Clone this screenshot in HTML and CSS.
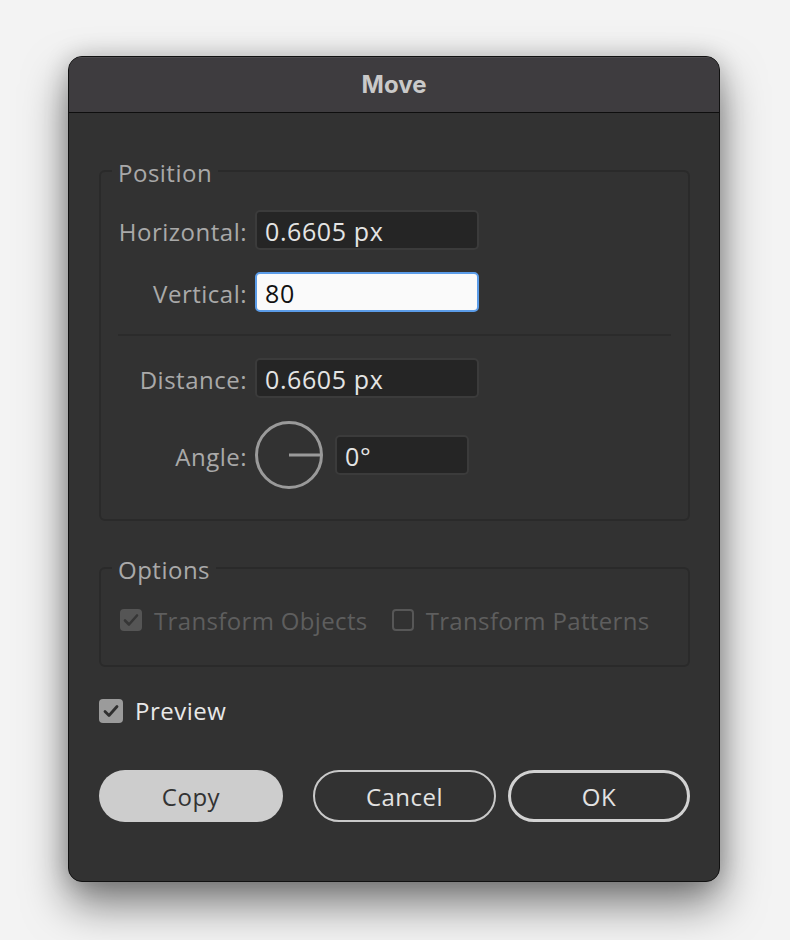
FILE: index.html
```html
<!DOCTYPE html>
<html>
<head>
<meta charset="utf-8">
<title>Move</title>
<link rel="stylesheet" href="styles.css">
</head>
<body>
<div class="window">
  <div class="titlebar">Move</div>
  <div class="content">
    <fieldset class="group position">
      <legend>Position</legend>
      <div class="row">
        <label class="lbl">Horizontal:</label>
        <div class="field">0.6605 px</div>
      </div>
      <div class="row">
        <label class="lbl">Vertical:</label>
        <div class="field focus">80</div>
      </div>
      <div class="sep"></div>
      <div class="row">
        <label class="lbl">Distance:</label>
        <div class="field">0.6605 px</div>
      </div>
      <div class="row">
        <label class="lbl">Angle:</label>
        <div class="angle">
          <svg class="dial" width="70" height="70" viewBox="0 0 70 70">
            <circle cx="35" cy="35" r="32.5" fill="none" stroke="#9a9a9a" stroke-width="3"/>
            <line x1="35" y1="35" x2="67" y2="35" stroke="#9a9a9a" stroke-width="3"/>
          </svg>
          <div class="field small">0°</div>
        </div>
      </div>
    </fieldset>

    <fieldset class="group options">
      <legend>Options</legend>
      <div class="checks">
        <span class="check disabled checked">
          <span class="box"><svg width="22" height="22" viewBox="0 0 22 22"><polyline points="5,11.5 9,15.5 17,6.5" fill="none" stroke="#363636" stroke-width="2.6" stroke-linecap="round" stroke-linejoin="round"/></svg></span>
          <span class="ctext">Transform Objects</span>
        </span>
        <span class="check disabled">
          <span class="box empty"></span>
          <span class="ctext">Transform Patterns</span>
        </span>
      </div>
    </fieldset>

    <div class="preview">
      <span class="pbox"><svg width="24" height="24" viewBox="0 0 24 24"><polyline points="6,12.5 10,16.5 18,7.5" fill="none" stroke="#2f2f2f" stroke-width="2.8" stroke-linecap="round" stroke-linejoin="round"/></svg></span>
      <span class="ptext">Preview</span>
    </div>

    <div class="buttons">
      <button class="btn copy">Copy</button>
      <button class="btn cancel">Cancel</button>
      <button class="btn ok">OK</button>
    </div>
  </div>
</div>
</body>
</html>
```
FILE: styles.css
```css
html, body {
  margin: 0;
  padding: 0;
}
body {
  width: 790px;
  height: 940px;
  background: #f3f3f3;
  font-family: "Open Sans", "Noto Sans", sans-serif;
  padding: 56px 0 0 68px;
  box-sizing: border-box;
  overflow: hidden;
}
.window {
  width: 652px;
  height: 826px;
  box-sizing: border-box;
  border: 1px solid #111;
  border-radius: 14px;
  background: #323232;
  overflow: hidden;
  box-shadow: 0 22px 44px rgba(0,0,0,0.5), 0 0 24px rgba(0,0,0,0.18);
  display: flex;
  flex-direction: column;
}
.titlebar {
  height: 55px;
  flex: none;
  background: #3e3c3f;
  border-bottom: 1px solid #0e0e0e;
  color: #c9c9c9;
  font-family: Inter, Roboto, sans-serif;
  font-weight: 700;
  font-size: 24px;
  line-height: 55px;
  text-align: center;
  box-shadow: inset 0 1px 0 rgba(255,255,255,0.08);
}
.content {
  flex: 1;
  padding: 42px 29px 0 30px;
  display: flex;
  flex-direction: column;
  font-size: 24px;
  letter-spacing: 0.5px;
}
.group {
  margin: 0;
  border: 2px solid #2a2a2a;
  border-radius: 6px;
  min-inline-size: 0;
}
.group legend {
  margin-left: 11px;
  padding: 4px 6px 0 6px;
  color: #a9a9a9;
  font-size: 24px;
  line-height: 28px;
}
.position {
  padding: 23px 0 29px 0;
  display: flex;
  flex-direction: column;
  gap: 22px;
}
.row {
  display: grid;
  grid-template-columns: 146px auto;
  column-gap: 8px;
  align-items: center;
}
.lbl {
  text-align: right;
  color: #a9a9a9;
  font-size: 24px;
  line-height: 28px;
  padding-top: 3px;
}
.field {
  width: 224px;
  height: 40px;
  box-sizing: border-box;
  border: 2px solid #3b3b3b;
  border-radius: 5px;
  background: #252525;
  color: #e4e4e4;
  font-size: 25px;
  letter-spacing: 0.6px;
  line-height: 33px;
  padding: 3px 8px 0 8px;
}
.field.focus {
  background: #fafafa;
  border-color: #5b9ce8;
  color: #111;
}
.field.small {
  width: 134px;
}
.sep {
  height: 2px;
  background: #2b2b2b;
  margin: 0 17px;
}
.angle {
  display: flex;
  align-items: center;
  gap: 11px;
}
.dial {
  display: block;
  margin-left: -1px;
}
.options {
  margin-top: 31px;
  padding: 21px 0 30px 0;
}
.checks {
  display: flex;
  align-items: center;
  padding-left: 19px;
  gap: 24px;
}
.check {
  display: flex;
  align-items: center;
  gap: 12px;
}
.check .box {
  width: 22px;
  height: 22px;
  border-radius: 4px;
  background: #555;
  box-sizing: border-box;
  display: block;
}
.check .box svg { display: block; }
.check .box.empty {
  background: transparent;
  border: 2px solid #575757;
}
.ctext {
  color: #5e5e5e;
  font-size: 24px;
  line-height: 28px;
  letter-spacing: 0.35px;
  padding-top: 2px;
}
.preview {
  margin-top: 30px;
  display: flex;
  align-items: center;
  gap: 12px;
}
.pbox {
  width: 24px;
  height: 24px;
  border-radius: 4px;
  background: #9b9b9b;
  display: block;
}
.pbox svg { display: block; }
.ptext {
  color: #e8e8e8;
  font-size: 24px;
  line-height: 28px;
}
.buttons {
  margin-top: 45px;
  display: flex;
  align-items: center;
}
.btn {
  height: 52px;
  border-radius: 26px;
  font-family: "Open Sans", "Noto Sans", sans-serif;
  font-size: 24px;
  letter-spacing: 0.5px;
  padding: 0;
  box-sizing: border-box;
  background: transparent;
}
.copy {
  width: 184px;
  background: #cdcdcd;
  border: none;
  color: #333;
}
.cancel {
  width: 183px;
  margin-left: auto;
  border: 2px solid #c9c9c9;
  color: #e2e2e2;
}
.ok {
  width: 182px;
  margin-left: 12px;
  border: 3px solid #d2d2d2;
  color: #e2e2e2;
}
```
